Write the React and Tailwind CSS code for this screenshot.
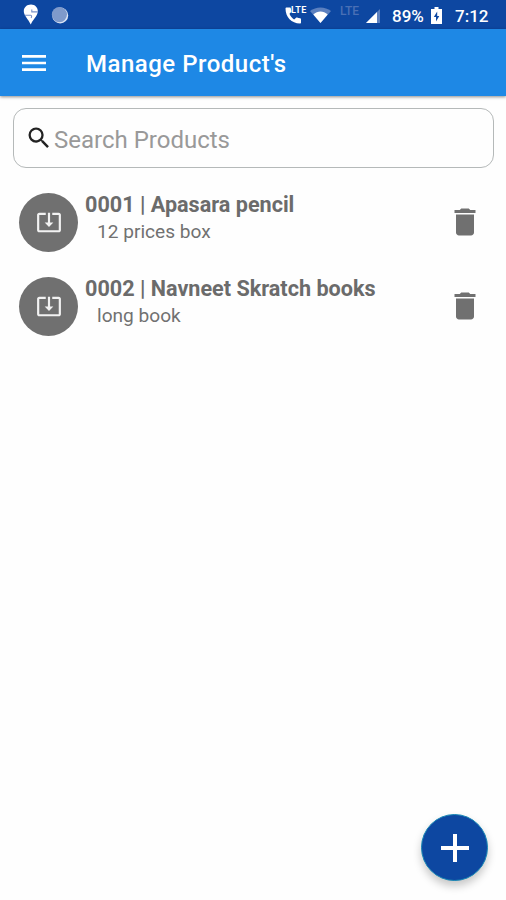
import { MdAdd, MdDelete, MdMenu, MdSearch, MdSystemUpdateAlt } from 'react-icons/md'

const PRODUCTS = [
  { id: '0001', name: 'Apasara pencil', description: '12 prices box' },
  { id: '0002', name: 'Navneet Skratch books', description: 'long book' }
]

function StatusBar() {
  return (
    <div className="flex h-[29px] shrink-0 items-center bg-[#0d47a1] pl-[23px] pr-[17px] text-white">
      {/* Notifications */}
      <svg className="h-[21px] w-4" viewBox="0 0 16 21" aria-hidden="true">
        <path d="M8 .5C3.800.5.8 3.300.8 7.300c0 4.200 4.200 7.600 7 13.200 1.400-4 7-8.600 7-13.200C14.800 3.300 12 .5 8 .5z" fill="#fff" />
        <path d="M14.800 7.900H8.800V5.400M1.800 11.200h5.900c1.300 0 1 2 .4 2.800" fill="none" stroke="#7891c8" strokeWidth="1.100" />
      </svg>
      <svg className="ml-3 h-[18px] w-[18px]" viewBox="0 0 18 18" aria-hidden="true">
        <circle cx="9.200" cy="9.400" r="8" fill="#dce5f5" />
        <circle cx="8.400" cy="8.600" r="7.600" fill="#7f9acb" />
      </svg>

      <div className="flex-1" />

      {/* Phone, network and battery */}
      <div className="relative h-[18px] w-[23px]">
        <svg className="h-[18px] w-[18px]" viewBox="0 0 18 18" aria-hidden="true">
          <path d="M.5 2.500C.5 11 6.500 17.500 15 17.500c.6 0 1-.4 1-1v-3.300c0-.5-.3-.9-.9-1-1.100-.1-2.100-.4-3-.7-.4-.1-.8 0-1 .2l-2 1.700C7 12.200 5 9.500 4.500 7.800L6.200 6c.3-.3.400-.7.2-1-.3-.9-.5-1.800-.6-2.700 0-.6-.4-.8-.9-.8H1.400c-.5 0-.9.4-.9 1z" fill="#fff" />
        </svg>
        <span className="absolute left-[6px] top-0 text-[9px] font-bold leading-[9px] tracking-[0.400px]">LTE</span>
      </div>
      <svg className="ml-[2px] h-4 w-[21px]" viewBox="0 0 21 16" aria-hidden="true">
        <path d="M10.500 16L0 4C6-.8 15-.8 21 4z" fill="#5c80bf" />
        <path d="M10.500 16L3.300 7.600c4.200-4 10.200-4 14.400 0z" fill="#fff" />
      </svg>
      <span className="mb-[8px] ml-[9px] w-[26px] text-[12px] font-medium leading-none text-[#4a70b5]">LTE</span>
      <svg className="mt-[2px] h-[14px] w-[14px]" viewBox="0 0 14 14" aria-hidden="true">
        <path d="M14 0v14H0z" fill="#5c80bf" />
        <path d="M11 3V14H0z" fill="#fff" />
      </svg>
      <span className="ml-3 mt-[3px] w-[39px] text-[17px] font-medium leading-none">89%</span>
      <svg className="mt-[2px] h-[17px] w-[11px]" viewBox="0 0 11 17" aria-hidden="true">
        <path d="M3.500 0h4v2H11v15H0V2h3.500z" fill="#fff" />
        <path d="M6.200 4.500L2.800 10h2.200v4.500L8.300 9H6.200z" fill="#0d47a1" />
      </svg>
      <span className="ml-[13px] mt-[3px] w-[34px] whitespace-nowrap text-[17px] font-medium leading-none">7:12</span>
    </div>
  )
}

function ProductRow({ product }) {
  return (
    <li className="flex h-[84px] items-center pl-[19px] pr-[23px]">
      <div className="flex h-[59px] w-[59px] shrink-0 items-center justify-center rounded-full bg-[#707070]">
        <MdSystemUpdateAlt className="h-[26px] w-[26px] text-[#f2f2f2]" />
      </div>
      <div className="ml-[7px] flex-1 whitespace-nowrap pb-[9px] text-[#6b6b6b]">
        <p className="text-[21.600px] font-bold leading-[28px]">{product.id} | {product.name}</p>
        <p className="ml-3 text-[19.100px] leading-[26px] text-[#717171]">{product.description}</p>
      </div>
      <button aria-label={`Delete ${product.name}`}>
        <MdDelete className="h-9 w-9 text-[#707070]" />
      </button>
    </li>
  )
}

export default function App() {
  return (
    <div className="flex h-[900px] w-[506px] flex-col overflow-hidden bg-[#fefefe] font-['Roboto',sans-serif]">
      <StatusBar />

      <header className="flex h-[67px] shrink-0 items-center bg-[#1e88e5] pl-[18px] text-white shadow-[0_1px_3px_rgba(0,0,0,0.450)]">
        <button aria-label="Menu">
          <MdMenu className="h-8 w-8" />
        </button>
        <h1 className="ml-9 mt-[2px] text-[24px] font-medium leading-[30px] tracking-[0.500px]">Manage Product's</h1>
      </header>

      <label className="ml-[13px] mr-3 mt-3 flex h-[60px] shrink-0 items-center rounded-[13px] border border-[#b5b9b9] pl-[11px]">
        <MdSearch className="h-7 w-7 shrink-0 text-[#222]" />
        <input
          className="ml-[1px] mt-[3px] flex-1 bg-transparent text-[24px] leading-[30px] placeholder:text-[#999]"
          placeholder="Search Products"
        />
      </label>

      <ul className="mt-[12px] flex-1">
        {PRODUCTS.map(product => (
          <ProductRow key={product.id} product={product} />
        ))}
      </ul>

      <button
        className="mb-[19px] mr-[18px] flex h-[67px] w-[67px] shrink-0 items-center justify-center self-end rounded-full border border-[#1787b5] bg-[#0d47a1] text-white shadow-[0_5px_9px_rgba(0,0,0,0.220)]"
        aria-label="Add product"
      >
        <MdAdd className="h-12 w-12" />
      </button>
    </div>
  )
}
